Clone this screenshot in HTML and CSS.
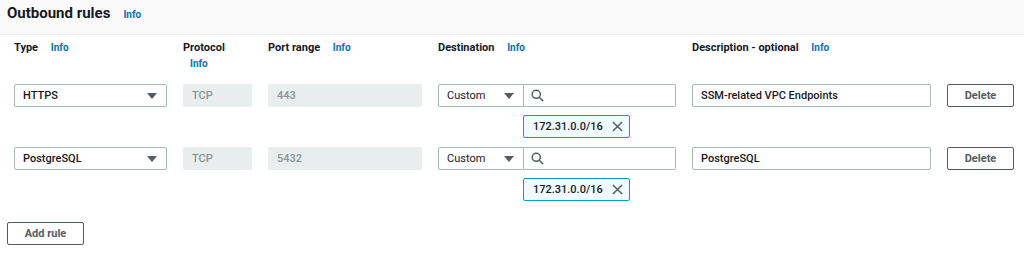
FILE: index.html
```html
<!DOCTYPE html>
<html lang="en">
<head>
  <meta charset="UTF-8" />
  <title>Outbound rules</title>
  <link rel="stylesheet" href="styles.css">
</head>
<body>
  <div class="panel-header">
    <h2 class="title">Outbound rules</h2>
    <a class="info" href="#">Info</a>
  </div>

  <div class="rules">
    <div class="col-head">Type <a class="info" href="#">Info</a></div>
    <div class="col-head col-wrap">Protocol <a class="info" href="#">Info</a></div>
    <div class="col-head">Port range <a class="info" href="#">Info</a></div>
    <div class="col-head">Destination <a class="info" href="#">Info</a></div>
    <div class="col-head">Description - optional <a class="info" href="#">Info</a></div>
    <div></div>

    <!-- rule 1 -->
    <div class="select">HTTPS<span class="caret"></span></div>
    <div class="field disabled">TCP</div>
    <div class="field disabled">443</div>
    <div class="dest">
      <div class="dest-row">
        <div class="select small">Custom<span class="caret"></span></div>
        <div class="search">
          <svg width="13" height="13" viewBox="0 0 16 16"><circle cx="6.5" cy="6.5" r="5" fill="none" stroke="#545b64" stroke-width="1.8"/><line x1="10.2" y1="10.2" x2="14.5" y2="14.5" stroke="#545b64" stroke-width="1.8" stroke-linecap="round"/></svg>
        </div>
      </div>
      <div class="token">172.31.0.0/16
        <svg width="11" height="11" viewBox="0 0 12 12"><path d="M1 1L11 11M11 1L1 11" stroke="#545b64" stroke-width="1.6"/></svg>
      </div>
    </div>
    <div class="field">SSM-related VPC Endpoints</div>
    <div><button class="btn">Delete</button></div>

    <!-- rule 2 -->
    <div class="select">PostgreSQL<span class="caret"></span></div>
    <div class="field disabled">TCP</div>
    <div class="field disabled">5432</div>
    <div class="dest">
      <div class="dest-row">
        <div class="select small">Custom<span class="caret"></span></div>
        <div class="search">
          <svg width="13" height="13" viewBox="0 0 16 16"><circle cx="6.5" cy="6.5" r="5" fill="none" stroke="#545b64" stroke-width="1.8"/><line x1="10.2" y1="10.2" x2="14.5" y2="14.5" stroke="#545b64" stroke-width="1.8" stroke-linecap="round"/></svg>
        </div>
      </div>
      <div class="token">172.31.0.0/16
        <svg width="11" height="11" viewBox="0 0 12 12"><path d="M1 1L11 11M11 1L1 11" stroke="#545b64" stroke-width="1.6"/></svg>
      </div>
    </div>
    <div class="field">PostgreSQL</div>
    <div><button class="btn">Delete</button></div>
  </div>

  <div class="footer">
    <button class="btn add">Add rule</button>
  </div>
</body>
</html>
```

FILE: styles.css
```css
body {
  margin: 0;
  padding: 0;
  width: 1024px;
  height: 255px;
  background: #fff;
  font-family: Roboto, "Liberation Sans", sans-serif;
  color: #16191f;
  overflow: hidden;
}

.panel-header {
  height: 35px;
  box-sizing: border-box;
  padding: 4px 0 0 7px;
  background: #fafafa;
  border-bottom: 1px solid #eaeded;
  display: flex;
  align-items: baseline;
}

.title {
  margin: 0;
  font-size: 15px;
  font-weight: 700;
}

.info {
  font-size: 10px;
  font-weight: 700;
  color: #0073bb;
  text-decoration: none;
  margin-left: 13px;
}

.rules {
  display: grid;
  grid-template-columns: 153px 69px 154px 238px 239px 67px;
  column-gap: 16px;
  padding: 5px 0 0 14px;
}

.col-head {
  font-size: 11px;
  font-weight: 700;
  line-height: 15px;
  height: 44px;
}

.col-head .info {
  margin-left: 10px;
}

.col-wrap {
  width: 50px;
}

.col-wrap .info {
  display: block;
  margin: 1px 0 0 7px;
}

.select,
.field,
.search {
  height: 23px;
  box-sizing: border-box;
  border: 1px solid #aab7b8;
  border-radius: 2px;
  font-size: 11px;
  line-height: 21px;
  padding: 0 8px;
  white-space: nowrap;
}

.select {
  display: flex;
  justify-content: space-between;
  align-items: center;
  font-weight: 500;
}

.field {
  font-weight: 500;
}

.field.disabled {
  background: #eaeded;
  border-color: #eaeded;
  color: #879596;
}

.caret {
  width: 0;
  height: 0;
  border-left: 5px solid transparent;
  border-right: 5px solid transparent;
  border-top: 6px solid #545b64;
  margin-right: 1px;
}

.dest {
  height: 63px;
}

.dest-row {
  display: flex;
}

.select.small {
  width: 86px;
  border-radius: 2px 0 0 2px;
  font-weight: 400;
}

.search {
  flex: 1;
  border-left: none;
  border-radius: 0 2px 2px 0;
  display: flex;
  align-items: center;
  padding-left: 7px;
}

.token {
  display: inline-flex;
  align-items: center;
  gap: 9px;
  margin: 8px 0 0 85px;
  height: 23px;
  box-sizing: border-box;
  padding: 0 6px 0 9px;
  background: #f1faff;
  border: 1px solid #00a1c9;
  border-radius: 2px;
  font-size: 11px;
  font-weight: 500;
}

.btn {
  height: 23px;
  width: 67px;
  box-sizing: border-box;
  background: #fff;
  border: 1px solid #545b64;
  border-radius: 2px;
  font-family: inherit;
  font-size: 11px;
  font-weight: 700;
  color: #545b64;
  padding: 0;
}

.footer {
  padding: 12px 0 0 7px;
}

.btn.add {
  width: 77px;
}
```
